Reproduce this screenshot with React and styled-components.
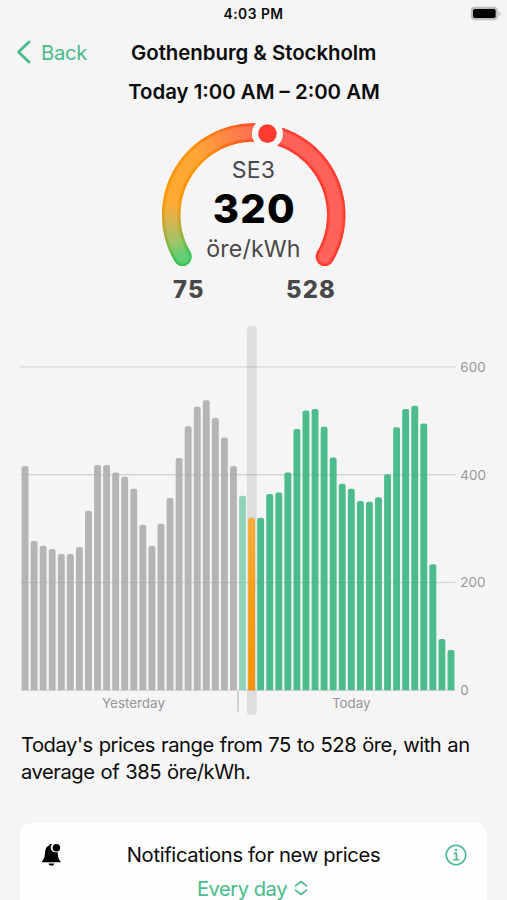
import React from 'react';
import styled, { createGlobalStyle } from 'styled-components';

const green = '#4abb8b';

const GlobalStyle = createGlobalStyle`
  * {
    box-sizing: border-box;
  }

  body {
    background: #f5f5f5;
    color: #0b0b0b;
    font-family: Inter, "Liberation Sans", sans-serif;
    margin: 0;
    overflow: hidden;
  }

  svg {
    display: block;
  }
`;

const Screen = styled.div`
  display: flex;
  flex-direction: column;
  height: 900px;
  overflow: hidden;
  width: 507px;

  > * {
    flex: none;
  }
`;

const StatusBar = styled.header`
  align-items: center;
  display: grid;
  grid-template-columns: 1fr auto 1fr;
  height: 27px;
  padding: 0 6px;
`;

const Clock = styled.span`
  font-size: 13.8px;
  font-weight: 600;
  grid-column: 2;
  letter-spacing: 0.5px;
`;

const Battery = styled.svg`
  justify-self: end;
`;

const NavBar = styled.nav`
  align-items: center;
  display: grid;
  grid-template-columns: 115px auto 1fr;
  height: 50px;
  padding-left: 16px;
`;

const Back = styled.a`
  align-items: center;
  color: ${green};
  display: flex;
  font-size: 20.3px;
  gap: 10px;
  letter-spacing: -0.3px;
`;

const Title = styled.h1`
  font-size: 20.4px;
  font-weight: 600;
  letter-spacing: -0.03px;
  margin: 0;
  white-space: nowrap;
`;

const Period = styled.h2`
  font-size: 20.4px;
  font-weight: 600;
  height: 40px;
  letter-spacing: 0;
  line-height: 29px;
  margin: 0;
  padding-left: 1px;
  text-align: center;
`;

const Dial = styled.svg`
  align-self: center;
  margin-left: 1px;
`;

const DialText = styled.text`
  fill: ${props => props.$color || '#48484a'};
  font-size: ${props => props.$size}px;
  font-weight: ${props => props.$weight || 400};
  letter-spacing: ${props => props.$spacing || 0}px;
  text-anchor: middle;
`;

const Plot = styled.svg`
  overflow: hidden;
`;

const AxisText = styled.text`
  fill: #979797;
  font-size: 13.4px;
  letter-spacing: ${props => props.$spacing || 0}px;
  text-anchor: ${props => props.$anchor || 'start'};
`;

const Summary = styled.p`
  font-size: 20.2px;
  letter-spacing: -0.47px;
  line-height: 27px;
  margin: 0;
  padding: 10px 21px 0;
  white-space: nowrap;
  word-spacing: 0.8px;
`;

const Card = styled.section`
  background: #fefefe;
  border-radius: 11px;
  height: 100px;
  margin: 37.5px 20px 0;
  padding: 15px 20px 0 21px;
`;

const CardRow = styled.div`
  align-items: center;
  display: flex;
  height: 34px;
  justify-content: space-between;
`;

const CardLabel = styled.span`
  font-size: 20.2px;
  letter-spacing: -0.34px;
`;

const Picker = styled.div`
  align-items: center;
  color: ${green};
  display: flex;
  font-size: 20.2px;
  gap: 7px;
  height: 33px;
  justify-content: center;
  letter-spacing: -0.5px;
  padding-right: 3px;
`;

const yesterday = [
  416, 277, 268, 262, 253, 253, 266, 333, 418, 418, 404, 396,
  374, 307, 268, 309, 357, 431, 490, 526, 538, 505, 469, 416
];

const today = [
  361, 320, 320, 364, 367, 404, 485, 519, 522, 489, 432, 383,
  374, 351, 350, 358, 401, 488, 522, 528, 495, 234, 95, 75
];

// Dial geometry, angles in degrees clockwise from the top
const CX = 92.7;
const CY = 98;
const R = 82.5;
const START = -120.5;
const SWEEP = 241;

const point = angle => {
  const a = (angle * Math.PI) / 180;
  return [CX + R * Math.sin(a), CY - R * Math.cos(a)];
};

const arc = (from, to) =>
  `M${point(from).join(' ')}A${R} ${R} 0 ${to - from > 180 ? 1 : 0} 1 ${point(to).join(' ')}`;

const stops = [
  [0, [58, 196, 84]],
  [0.04, [130, 184, 68]],
  [0.1, [198, 164, 40]],
  [0.16, [255, 149, 0]],
  [0.32, [255, 145, 6]],
  [0.54, [255, 59, 48]],
  [1, [255, 59, 48]]
];

const dialColor = t => {
  const i = Math.max(1, stops.findIndex(s => s[0] >= t));
  const [t0, a] = stops[i - 1];
  const [t1, b] = stops[i];
  const k = (t - t0) / (t1 - t0);
  return `rgb(${a.map((c, n) => Math.round(c + (b[n] - c) * k)).join(',')})`;
};

const STEPS = 121;
const segments = Array.from({ length: STEPS }, (_, i) => {
  const from = START + (SWEEP * i) / STEPS;
  const to = Math.min(START + SWEEP, from + (SWEEP / STEPS) * 1.5);
  return { d: arc(from, to), color: dialColor(i / (STEPS - 1)) };
});

const PriceDial = () => {
  const start = point(START);
  const end = point(START + SWEEP);
  const now = point(9.6);
  return (
    <Dial width="186" height="190" viewBox="0 0 186 190">
      <circle cx={start[0]} cy={start[1]} r="9.2" fill={dialColor(0)} />
      <circle cx={end[0]} cy={end[1]} r="9.2" fill={dialColor(1)} />
      { segments.map(s => <path key={s.d} d={s.d} fill="none" stroke={s.color} strokeWidth="18.4" />) }
      <path d={arc(START, START + SWEEP)} fill="none" stroke="#fff" strokeOpacity="0.1" strokeWidth="14.6" strokeLinecap="round" />
      <path d={arc(START, START + SWEEP)} fill="none" stroke="#fff" strokeOpacity="0.11" strokeWidth="12" strokeLinecap="round" />
      <circle cx={now[0]} cy={now[1]} r="15.5" fill="#f8f8f8" />
      <circle cx={now[0]} cy={now[1]} r="9.3" fill="#ff3b30" />
      <DialText x="92.5" y="60.8" $size={23} $spacing={0.2}>SE3</DialText>
      <DialText x="93.4" y="106.3" $size={40} $weight={800} $color="#000" $spacing={1.2}>320</DialText>
      <DialText x="92.5" y="140" $size={23.2} $spacing={0.15}>öre/kWh</DialText>
      <DialText x="27.8" y="181.3" $size={23.8} $weight={800} $spacing={1.2}>75</DialText>
      <DialText x="150" y="181.3" $size={23.8} $weight={800} $spacing={1.2}>528</DialText>
    </Dial>
  );
};

const BASE = 383.3;
const SCALE = 0.539;
const CELL = 9.063;
const LEFT = 20.5;
const CURRENT = 25;

const barPath = (i, value) => {
  const x = LEFT + i * CELL + 1.1;
  const y = BASE - value * SCALE;
  return `M${x} ${BASE}V${y + 2.2}q0 -2.2 2.2 -2.2h2.46q2.2 0 2.2 2.2V${BASE}z`;
};

const barColor = i => {
  if (i === CURRENT) return 'url(#current)';
  if (i < 24) return '#b4b4b4';
  return i < CURRENT ? '#8fd3b7' : green;
};

const PriceChart = () =>
  <Plot width="507" height="414" viewBox="0 0 507 414">
    <defs>
      <linearGradient id="current" x1="0" y1="0" x2="0" y2="1">
        <stop offset="0" stopColor="#ffad35" />
        <stop offset="0.6" stopColor="#ff9a0c" />
        <stop offset="1" stopColor="#ff9200" />
      </linearGradient>
    </defs>
    <rect x="247" y="19.3" width="9.6" height="388.4" rx="2.4" fill="#dedede" />
    {
      [0, 200, 400, 600].map(v =>
        <g key={v}>
          <rect
            x="20.5"
            y={BASE - v * SCALE - 0.7}
            width="435"
            height="1.4"
            fill="#000"
            fillOpacity="0.11"
          />
          <AxisText x="460.2" y={BASE - v * SCALE + 4.8} $spacing={0.15}>{v}</AxisText>
        </g>
      )
    }
    <g opacity="0.98">
      { [...yesterday, ...today].map((v, i) => <path key={i} d={barPath(i, v)} fill={barColor(i)} />) }
    </g>
    {/* the grid stays faintly visible across the bars */}
    { [200, 400].map(v => <rect key={v} x="20.5" y={BASE - v * SCALE - 0.7} width="435" height="1.4" fillOpacity="0.025" />) }
    <rect x="237.4" y="384" width="1.2" height="20.5" fill="#bcbcbc" />
    <AxisText x="133.5" y="401" $anchor="middle">Yesterday</AxisText>
    <AxisText x="351.3" y="401" $anchor="middle">Today</AxisText>
  </Plot>
;

const BellIcon = () =>
  <svg width="21" height="24" viewBox="0 0 21 24">
    <path
      fill="#000"
      d="M1.6 19.2c-.6 0-.8-.8-.3-1.3C3 16 3.700 14.500 3.900 10.500 4.100 6 5.500 3.400 8 2.600 8.400 1.300 9.400.8 11.300 1a4.700 4.700 0 0 0 3.300 8.200c.8.1 1.500 0 2.100-.3.200 5 .6 6.900 2.600 9 .6.600.3 1.300-.4 1.300zM7.500 20.600h5.900c-.3 1.400-1.500 2.100-3 2.100s-2.600-.7-2.900-2.100z"
    />
    <circle cx="15.400" cy="4.700" r="3.800" fill="#000" />
  </svg>
;

const InfoIcon = () =>
  <svg width="22" height="22" viewBox="0 0 22 22" fill="none" stroke={green} strokeWidth="1.6">
    <circle cx="11" cy="11" r="9.800" />
    <path d="M8.700 9.400h2.700v6.300M8.200 15.800h6" />
    <circle cx="11" cy="6" r="1.300" fill={green} stroke="none" />
  </svg>
;

const App = () =>
  <>
    <GlobalStyle />
    <Screen>
      <StatusBar>
        <Clock>4:03 PM</Clock>
        <Battery width="31" height="15" viewBox="0 0 31 15">
          <rect x="0.800" y="0.700" width="27" height="13.600" rx="4" fill="#bdbdbd" />
          <path d="M28.700 5.200c2.300.8 2.300 4 0 4.800z" fill="#bdbdbd" />
          <rect x="3" y="2.900" width="22.600" height="9.200" rx="1.800" fill="#000" />
        </Battery>
      </StatusBar>
      <NavBar>
        <Back>
          <svg width="15" height="24" viewBox="0 0 15 24" fill="none" stroke={green} strokeWidth="2.800" strokeLinecap="round" strokeLinejoin="round">
            <path d="M13 2L2.500 12 13 22" />
          </svg>
          Back
        </Back>
        <Title>Gothenburg &amp; Stockholm</Title>
      </NavBar>
      <Period>Today 1:00 AM – 2:00 AM</Period>
      <PriceDial />
      <PriceChart />
      <Summary>
        Today's prices range from 75 to 528 öre, with an<br />
        average of 385 öre/kWh.
      </Summary>
      <Card>
        <CardRow>
          <BellIcon />
          <CardLabel>Notifications for new prices</CardLabel>
          <InfoIcon />
        </CardRow>
        <Picker>
          Every day
          <svg width="14" height="16" viewBox="0 0 14 16" fill="none" stroke={green} strokeWidth="1.700" strokeLinecap="round" strokeLinejoin="round">
            <path d="M1.500 5.800L7 1.500l5.500 4.300M1.500 10.200L7 14.500l5.500-4.300" />
          </svg>
        </Picker>
      </Card>
    </Screen>
  </>
;

export default App;
